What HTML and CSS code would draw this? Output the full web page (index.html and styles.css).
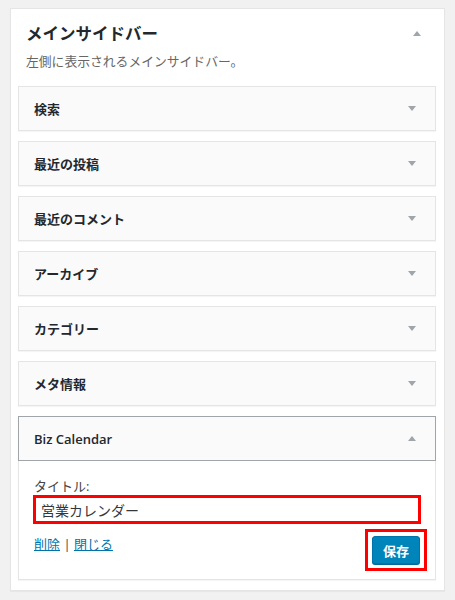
FILE: index.html
```html
<!DOCTYPE html>
<html lang="ja">
<head>
  <meta charset="UTF-8">
  <meta name="viewport" content="width=device-width, initial-scale=1.0">
  <title>ウィジェット</title>
  <link rel="stylesheet" href="styles.css">
</head>
<body>
  <main class="sidebar">
    <div class="sidebar-head">
      <h2>メインサイドバー</h2>
      <span class="arrow up"></span>
    </div>
    <p class="desc">左側に表示されるメインサイドバー。</p>

    <div class="widget">
      <div class="widget-top"><h3>検索</h3><span class="arrow down"></span></div>
    </div>
    <div class="widget">
      <div class="widget-top"><h3>最近の投稿</h3><span class="arrow down"></span></div>
    </div>
    <div class="widget">
      <div class="widget-top"><h3>最近のコメント</h3><span class="arrow down"></span></div>
    </div>
    <div class="widget">
      <div class="widget-top"><h3>アーカイブ</h3><span class="arrow down"></span></div>
    </div>
    <div class="widget">
      <div class="widget-top"><h3>カテゴリー</h3><span class="arrow down"></span></div>
    </div>
    <div class="widget">
      <div class="widget-top"><h3>メタ情報</h3><span class="arrow down"></span></div>
    </div>

    <div class="widget open">
      <div class="widget-top"><h3>Biz Calendar</h3><span class="arrow up"></span></div>
      <form class="widget-inside">
        <label for="title">タイトル:</label>
        <input type="text" id="title" name="title" value="営業カレンダー">
        <div class="widget-control">
          <div class="links"><a href="#">削除</a> | <a href="#">閉じる</a></div>
          <span class="mark"><button type="button">保存</button></span>
        </div>
      </form>
    </div>
  </main>
</body>
</html>
```

FILE: styles.css
```css
body {
  margin: 0;
  padding: 8px 10px;
  background: #f1f1f1;
  font-family: "Open Sans", "Noto Sans CJK JP", sans-serif;
  color: #23282d;
}

.sidebar {
  width: 435px;
  box-sizing: border-box;
  background: #fff;
  border: 1px solid #e5e5e5;
  box-shadow: 0 1px 1px rgba(0, 0, 0, 0.04);
  padding: 0 8px 10px 7px;
}

.sidebar-head {
  display: flex;
  justify-content: space-between;
  align-items: center;
  height: 32px;
  padding: 8px 15px 0 8px;
}

.sidebar-head h2 {
  margin: 0;
  font-size: 16.5px;
  font-weight: bold;
  font-family: "Noto Sans CJK JP", sans-serif;
}

.desc {
  margin: 0 0 13px 8px;
  font-size: 12.8px;
  line-height: 24px;
  color: #666;
  font-family: "Noto Sans CJK JP", sans-serif;
}

.arrow {
  width: 0;
  height: 0;
  border-left: 4px solid transparent;
  border-right: 4px solid transparent;
}

.arrow.down {
  border-top: 5px solid #a0a5aa;
}

.arrow.up {
  border-bottom: 5px solid #a0a5aa;
}

.widget {
  border: 1px solid #e5e5e5;
  background: #fafafa;
  margin-bottom: 10px;
  box-shadow: 0 1px 1px rgba(0, 0, 0, 0.04);
}

.widget:last-child {
  margin-bottom: 0;
}

.widget-top {
  display: flex;
  justify-content: space-between;
  align-items: center;
  height: 43px;
  padding: 0 19px 0 15px;
}

.widget-top h3 {
  margin: 0;
  font-size: 13px;
  font-weight: 600;
}

.widget.open {
  border-color: #e5e5e5;
  background: #fff;
}

.widget.open .widget-top {
  background: #fafafa;
  border: 1px solid #a0a5aa;
  margin: -1px -1px 0;
}

.widget-inside {
  display: flex;
  flex-direction: column;
  padding: 16px 8px 8px 14px;
}

label {
  font-size: 13px;
  color: #444;
  line-height: 18px;
  padding-left: 1px;
}

input {
  margin: 0 6px 0 0;
  height: 29px;
  box-sizing: border-box;
  border: 3px solid #f00;
  padding: 0 5px;
  font-size: 14px;
  font-family: "Open Sans", "Noto Sans CJK JP", sans-serif;
  color: #32373c;
  outline: none;
}

.widget-control {
  display: flex;
  justify-content: space-between;
  align-items: flex-start;
  margin-top: 5px;
}

.links {
  font-size: 13px;
  color: #444;
  padding: 5px 0 0 1px;
}

.links a {
  color: #0073aa;
}

.mark {
  border: 3px solid #f00;
  padding: 4px;
}

button {
  display: block;
  width: 48px;
  height: 28px;
  background: #0085ba;
  border: 1px solid #0073aa;
  border-radius: 3px;
  box-shadow: 0 1px 0 #006799;
  color: #fff;
  font-size: 13px;
  font-weight: bold;
  font-family: "Noto Sans CJK JP", sans-serif;
  padding: 0;
}
```
